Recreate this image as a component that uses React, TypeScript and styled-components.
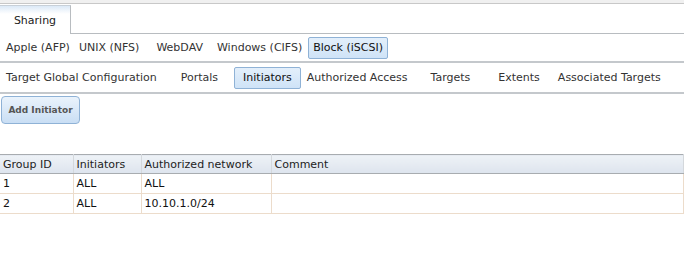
import styled, { createGlobalStyle } from 'styled-components';

const GlobalStyle = createGlobalStyle`
  html, body {
    margin: 0;
    padding: 0;
    background: #ffffff;
  }
  body {
    font-family: "DejaVu Sans", Verdana, sans-serif;
    font-size: 11px;
    color: #333;
  }
`

const Page = styled.div`
  width: 684px;
  height: 254px;
  overflow: hidden;
  background: #fff;
  border-top: 3px solid #f0f0f0;
  box-sizing: border-box;
`

const TopLine = styled.div`
  height: 1px;
  background: #c8c8c8;
`

const MainTabs = styled.div`
  display: flex;
  margin-top: 1px;
  height: 29px;
`

const MainTab = styled.div`
  width: 71px;
  border-top: 1px solid #c8d0d8;
  border-right: 1px solid #b8bcc0;
  background: linear-gradient(to bottom, #dbe9f7 0px, #ffffff 8px, #ffffff);
  display: flex;
  align-items: center;
  justify-content: center;
  padding-top: 1px;
  box-sizing: border-box;
  color: #222;
`

const MainTabRest = styled.div`
  flex: 1;
  border-bottom: 1px solid #b8bcc0;
`

const TabRow = styled.div<{ $h: number }>`
  display: flex;
  align-items: center;
  height: ${p => p.$h}px;
  border-bottom: 2px solid #c4c8cc;
  box-sizing: border-box;
  white-space: nowrap;
`

const SubTab = styled.div<{ $active?: boolean; $ml?: number; $pad?: number }>`
  box-sizing: border-box;
  height: 22px;
  display: flex;
  align-items: center;
  padding: 0 ${p => (p.$active ? p.$pad ?? 4 : 0)}px;
  margin-left: ${p => p.$ml ?? 0}px;
  border-radius: 2px;
  color: ${p => (p.$active ? '#111' : '#333')};
  border: 1px solid ${p => (p.$active ? '#8fb2d6' : 'transparent')};
  background: ${p => (p.$active ? 'linear-gradient(to bottom, #e3effb, #cfe3f7)' : 'transparent')};
`

const Toolbar = styled.div`
  padding: 2px 0 0 1px;
  height: 60px;
  box-sizing: border-box;
`

const AddButton = styled.button`
  width: 79px;
  height: 28px;
  border: 1px solid #8fb2d6;
  border-radius: 4px;
  background: linear-gradient(to bottom, #eaf3fc, #c9def4);
  font-family: "DejaVu Sans", Verdana, sans-serif;
  font-size: 9px;
  font-weight: bold;
  color: #555;
  padding: 0;
`

const Table = styled.table`
  width: 100%;
  border-collapse: collapse;
  font-size: 11px;
  color: #111;
`

const Th = styled.th<{ $w?: number }>`
  text-align: left;
  font-weight: normal;
  height: 19px;
  padding: 0 3px;
  ${p => (p.$w ? `width: ${p.$w}px;` : '')}
  border-top: 1px solid #a8acb0;
  border-bottom: 1px solid #a8acb0;
  border-right: 1px solid #d4d8dc;
  background: linear-gradient(to bottom, #eef2f7, #dde4ee);
  box-sizing: border-box;
  color: #222;
`

const Td = styled.td`
  height: 20px;
  padding: 0 3px;
  border-bottom: 1px solid #ecdccb;
  border-right: 1px solid #ecdccb;
  box-sizing: border-box;
`

const rows = [
  { id: '1', init: 'ALL', net: 'ALL', comment: '' },
  { id: '2', init: 'ALL', net: '10.10.1.0/24', comment: '' },
];

const App = () => {
  return (
    <>
      <GlobalStyle />
      <Page>
        <TopLine />
        <MainTabs>
          <MainTab>Sharing</MainTab>
          <MainTabRest />
        </MainTabs>
        <TabRow $h={29}>
          <SubTab $ml={5}>Apple (AFP)</SubTab>
          <SubTab $ml={7}>UNIX (NFS)</SubTab>
          <SubTab $ml={15}>WebDAV</SubTab>
          <SubTab $ml={12}>Windows (CIFS)</SubTab>
          <SubTab $ml={5} $pad={4} $active>Block (iSCSI)</SubTab>
        </TabRow>
        <TabRow $h={31}>
          <SubTab $ml={5}>Target Global Configuration</SubTab>
          <SubTab $ml={22}>Portals</SubTab>
          <SubTab $ml={15} $pad={8} $active>Initiators</SubTab>
          <SubTab $ml={5}>Authorized Access</SubTab>
          <SubTab $ml={21}>Targets</SubTab>
          <SubTab $ml={26}>Extents</SubTab>
          <SubTab $ml={16}>Associated Targets</SubTab>
        </TabRow>
        <Toolbar>
          <AddButton>Add Initiator</AddButton>
        </Toolbar>
        <Table>
          <thead>
            <tr>
              <Th $w={73}>Group ID</Th>
              <Th $w={68}>Initiators</Th>
              <Th $w={130}>Authorized network</Th>
              <Th>Comment</Th>
            </tr>
          </thead>
          <tbody>
            {rows.map(r => (
              <tr key={r.id}>
                <Td>{r.id}</Td>
                <Td>{r.init}</Td>
                <Td>{r.net}</Td>
                <Td>{r.comment}</Td>
              </tr>
            ))}
          </tbody>
        </Table>
      </Page>
    </>
  )
}

export default App
